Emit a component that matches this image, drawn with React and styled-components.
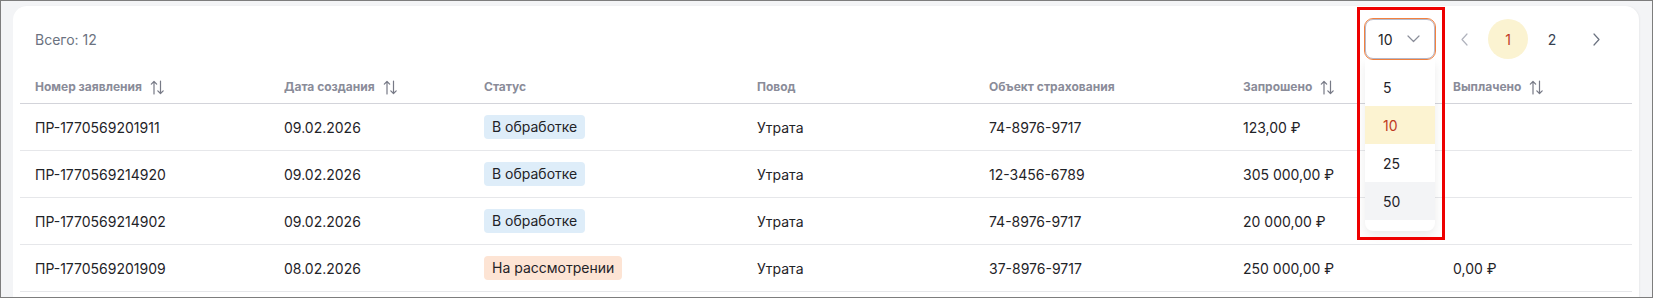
import React from "react";
import styled, { createGlobalStyle } from "styled-components";

const GlobalStyle = createGlobalStyle`
  html, body {
    margin: 0;
    padding: 0;
  }
  body {
    font-family: Inter, "Noto Sans", "Liberation Sans", sans-serif;
    color: #1f2328;
  }
`;

const Frame = styled.div`
  box-sizing: border-box;
  height: 298px;
  border: 1px solid #7d7d7d;
  background: #f3f4f6;
  padding: 5px 13px 0 12px;
  overflow: hidden;
`;

const Card = styled.div`
  background: #ffffff;
  border-radius: 14px;
  padding: 13px 7px 20px;
  box-shadow: 1px 0 2px rgba(0, 0, 0, 0.04);
`;

const TopBar = styled.div`
  display: flex;
  align-items: center;
  height: 40px;
  padding: 0 16px 0 15px;
`;

const Total = styled.span`
  font-size: 14px;
  color: #6b7280;
  flex: 1;
`;

const SelectWrap = styled.div`
  position: relative;
  margin-right: 8px;
`;

const SelectBox = styled.div`
  box-sizing: border-box;
  width: 70px;
  height: 40px;
  margin: 0 1px;
  display: flex;
  align-items: center;
  justify-content: space-between;
  padding: 0 14px 0 12px;
  border: 1px solid #b7b9ca;
  border-radius: 8px;
  outline: 1px solid #f2813f;
  font-size: 14px;
  color: #1f2328;
`;

const Menu = styled.div`
  position: absolute;
  top: 41px;
  left: 1px;
  width: 70px;
  padding: 8px 0 11px;
  background: #ffffff;
  border-radius: 0 0 8px 8px;
  box-shadow: 0 4px 10px rgba(0, 0, 0, 0.08);
  z-index: 2;
`;

const MenuItem = styled.div`
  height: 38px;
  display: flex;
  align-items: center;
  padding-left: 18px;
  font-size: 14px;
  color: ${(p) => (p.selected ? "#c0391f" : "#1f2328")};
  background: ${(p) =>
    p.selected ? "#fcf3d1" : p.hovered ? "#f3f4f6" : "transparent"};
`;

const Highlight = styled.div`
  position: absolute;
  left: -7px;
  top: -12px;
  width: 88px;
  height: 233px;
  box-sizing: border-box;
  border: 3px solid #ee0000;
  pointer-events: none;
  z-index: 3;
`;

const Pager = styled.div`
  display: flex;
  gap: 4px;
`;

const PageButton = styled.div`
  width: 40px;
  height: 40px;
  border-radius: 50%;
  display: flex;
  align-items: center;
  justify-content: center;
  font-size: 14px;
  color: ${(p) => (p.active ? "#c0391f" : "#374151")};
  background: ${(p) => (p.active ? "#fbf3d1" : "transparent")};
`;

const Arrow = styled(PageButton)`
  color: ${(p) => (p.disabled ? "#b0b3bd" : "#6b7280")};
`;

const Table = styled.table`
  width: 1612px;
  margin-top: 9px;
  border-collapse: collapse;
  table-layout: fixed;
`;

const Th = styled.th`
  text-align: left;
  padding: 11px 15px 8px;
  font-size: 12px;
  line-height: 16px;
  font-weight: 700;
  color: #8a8c99;
  border-bottom: 1px solid #d3d4da;
  white-space: nowrap;
`;

const HeadInner = styled.span`
  display: inline-flex;
  align-items: center;
  gap: 8px;
`;

const Td = styled.td`
  height: 46px;
  padding: 0 15px;
  font-size: 14px;
  color: #1f2328;
  border-bottom: 1px solid #e6e7ea;
  white-space: nowrap;
`;

const Badge = styled.span`
  display: inline-block;
  height: 24px;
  line-height: 24px;
  padding: 0 8px;
  border-radius: 4px;
  background: ${(p) => (p.tone === "review" ? "#fde4d4" : "#deedf9")};
  color: #1f2328;
`;

const SortIcon = () => (
  <svg width="14" height="15" viewBox="0 0 14 15" fill="none">
    <path
      d="M4 14V1.5M1.3 4.2L4 1.5l2.7 2.7"
      stroke="#777a86"
      strokeWidth="1.2"
      strokeLinecap="round"
      strokeLinejoin="round"
    />
    <path
      d="M10.5 1v12.5M7.8 10.8l2.7 2.7 2.7-2.7"
      stroke="#777a86"
      strokeWidth="1.2"
      strokeLinecap="round"
      strokeLinejoin="round"
    />
  </svg>
);

const Chevron = ({ dir = "down", color = "#8a8d99" }) => {
  const d = {
    down: "M1 1l5.5 5.5L12 1",
    left: "M6 1L1 6.5 6 12",
    right: "M1 1l5 5.5L1 12",
  }[dir];
  const size = dir === "down" ? [13, 8] : [7, 13];
  return (
    <svg width={size[0]} height={size[1]} viewBox={`0 0 ${size[0]} ${size[1]}`} fill="none">
      <path d={d} stroke={color} strokeWidth="1.2" strokeLinecap="round" strokeLinejoin="round" />
    </svg>
  );
};

const columns = [
  { title: "Номер заявления", width: 249, sort: true },
  { title: "Дата создания", width: 200, sort: true },
  { title: "Статус", width: 273 },
  { title: "Повод", width: 232 },
  { title: "Объект страхования", width: 254 },
  { title: "Запрошено", width: 210, sort: true },
  { title: "Выплачено", width: 194, sort: true },
];

const rows = [
  ["ПР-1770569201911", "09.02.2026", "В обработке", "Утрата", "74-8976-9717", "123,00 ₽", ""],
  ["ПР-1770569214920", "09.02.2026", "В обработке", "Утрата", "12-3456-6789", "305 000,00 ₽", ""],
  ["ПР-1770569214902", "09.02.2026", "В обработке", "Утрата", "74-8976-9717", "20 000,00 ₽", ""],
  ["ПР-1770569201909", "08.02.2026", "На рассмотрении", "Утрата", "37-8976-9717", "250 000,00 ₽", "0,00 ₽"],
];

export default function App() {
  return (
    <>
      <GlobalStyle />
      <Frame>
        <Card>
          <TopBar>
            <Total>Всего: 12</Total>
            <SelectWrap>
              <SelectBox>
                <span>10</span>
                <Chevron dir="down" />
              </SelectBox>
              <Menu>
                <MenuItem>5</MenuItem>
                <MenuItem selected>10</MenuItem>
                <MenuItem>25</MenuItem>
                <MenuItem hovered>50</MenuItem>
              </Menu>
              <Highlight />
            </SelectWrap>
            <Pager>
              <Arrow disabled>
                <Chevron dir="left" color="#b0b3bd" />
              </Arrow>
              <PageButton active>1</PageButton>
              <PageButton>2</PageButton>
              <Arrow>
                <Chevron dir="right" color="#6b7280" />
              </Arrow>
            </Pager>
          </TopBar>
          <Table>
            <colgroup>
              {columns.map((c) => (
                <col key={c.title} style={{ width: c.width }} />
              ))}
            </colgroup>
            <thead>
              <tr>
                {columns.map((c) => (
                  <Th key={c.title}>
                    <HeadInner>
                      {c.title}
                      {c.sort && <SortIcon />}
                    </HeadInner>
                  </Th>
                ))}
              </tr>
            </thead>
            <tbody>
              {rows.map((r) => (
                <tr key={r[0]}>
                  <Td>{r[0]}</Td>
                  <Td>{r[1]}</Td>
                  <Td>
                    <Badge tone={r[2] === "На рассмотрении" ? "review" : "work"}>{r[2]}</Badge>
                  </Td>
                  <Td>{r[3]}</Td>
                  <Td>{r[4]}</Td>
                  <Td>{r[5]}</Td>
                  <Td>{r[6]}</Td>
                </tr>
              ))}
            </tbody>
          </Table>
        </Card>
      </Frame>
    </>
  );
}
